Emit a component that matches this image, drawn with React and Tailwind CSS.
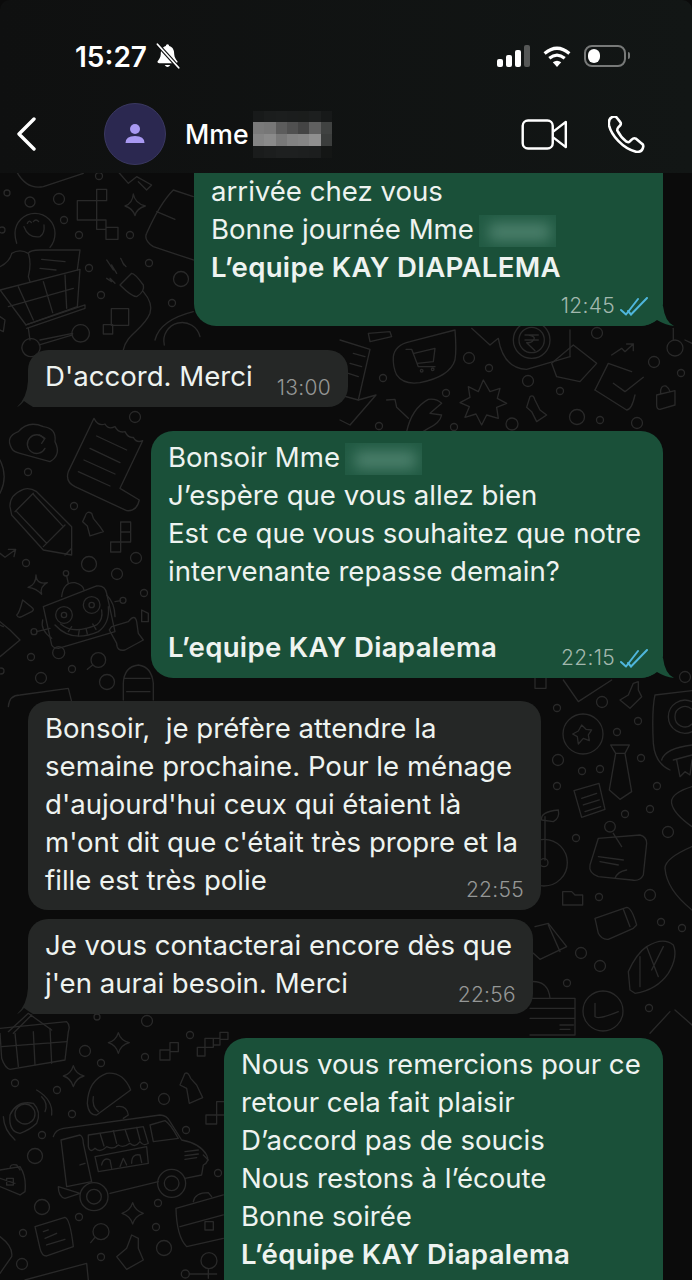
const circles = [
  [7,193,3],[30,202,5],[59,199,5.5],[64,220,3.5],[79,235,3.5],[130,235,3.5],[89,268,3.5],[149,263,3.5],[101,295,3.5],[181,279,7.5],[172,303,3.5],[99,176,3.5],[2,230,3],
  [135,417,5.5],[28,472,3.5],[74,506,3.5],[136,558,5.5],[117,574,5.5],[89,564,7.5],[26,563,3.5],[144,593,3.5],[31,657,3.5],[72,669,3.5],[41,678,5.5],[107,682,7.5],[1,671,3],
  [557,708,3.5],[602,702,5.5],[638,721,3.5],[617,732,3.5],[558,760,5.5],[582,771,3.5],[600,769,3.5],[641,758,3.5],[557,786,3.5],[657,786,3.5],[650,809,3.5],[625,814,3.5],[576,838,3.5],[668,832,5.5],[599,897,3.5],[650,895,5.5],[661,922,3.5],[682,928,3.5],[581,953,5.5],[600,966,5.5],[567,983,3.5],[649,1008,3.5],[685,677,5.5],[583,734,20],[603,1011,20],
  [85,1051,5.5],[101,1063,3.5],[145,1057,3.5],[147,1021,5.5],[97,1017,3],[190,1035,3.5],[15,1083,3.5],[57,1090,3.5],[144,1086,3.5],[164,1099,5.5],[72,1114,3.5],[42,1135,3.5],[35,1156,7.5],[186,1130,3.5],[218,1173,3.5],[42,1207,7.5],[79,1217,3.5],[158,1203,3.5],[156,1227,3.5],[23,1233,3.5],[164,1248,7.5],[101,1257,3.5],[22,1264,5.5],
  [469,358,5.5],[489,368,3.5],[383,378,3.5],[446,393,3.5],[528,381,5.5],[560,391,3.5],[597,333,5.5],[654,362,5.5],[681,373,3.5],[577,417,7.5],[600,420,3.5],[637,423,5.5],[512,424,6],[379,426,3.5],[454,427,3.5],[675,348,8],
];

const Z6 = [
  "M50 5 Q80 60 130 50 L250 10","M350 0 L385 40 L410 20 L455 45 L440 60 L415 35",
  "M72 170 Q85 205 120 200 Q135 190 132 165","M82 160 Q88 148 94 158 M100 155 Q108 145 116 155",
  "M45 190 A60 60 0 0 1 165 190 Q165 215 150 232 M50 220 Q45 205 45 190",
  "M0 290 Q30 275 35 250 Q60 235 85 250 Q95 280 85 320 L90 335","M85 250 Q90 240 120 240 L240 240 L232 300","M125 268 L195 275 M120 295 L168 300",
  "M0 360 L240 298 L232 410 L78 465 Z","M55 350 L100 450 M130 335 L158 428 M195 315 L200 415 M25 410 L220 355","M78 465 L255 405 L255 415 L80 475",
  "M93 506 A27 27 0 1 1 92.9 506 M242 464 A26 26 0 1 1 241.9 464","M85 475 L90 510 M118 525 L218 495 M120 510 L218 490",
  "M232 92 H290 V58 H320 V92 H290 V150 H232 Z M290 150 H318 V178 H290 Z M318 172 H354 V208 H318 Z",
  "M400 72 Q405 100 436 108 Q410 115 405 137 Q398 115 375 108 Q398 100 400 72Z",
  "M320 270 L340 300 L335 285 L350 310 M362 265 L372 285 L368 278 L378 290 M320 325 L335 335 L330 325 L345 340",
  "M360 345 L395 310 Q405 310 430 345 Q435 365 410 380 Q395 380 360 345 Z M430 365 Q460 400 450 430 C430 480 380 490 370 540",
  "M334 416 H386 V466 H334 Z M310 464 H338 V492 H310Z",
  "M520 60 L580 80 M520 60 Q480 100 440 190 Q430 210 460 230 L580 270 M470 125 L525 148",
  "M465 510 Q480 450 580 425","M0 440 L15 450 L10 485 L0 480","M493 525 A52 52 0 0 1 600 500",
];
const Z7 = [
  "M35 145 Q15 110 55 95 Q85 60 130 80 Q170 85 165 125 Q185 165 150 185 L60 160 Q40 155 35 145Z","M132 115 A28 28 0 1 0 135 145","M118 105 L135 115 L125 130",
  "M282 55 L205 215 Q195 245 225 260 L380 332 Q410 335 418 300 L360 265 L428 122 Q410 130 400 112 Q385 115 375 95 Q355 100 345 80 Q325 90 315 72 Q295 80 282 55Z","M290 108 L380 150 M270 145 L360 188 M252 180 L345 222 M235 215 L330 258",
  "M30 320 Q28 285 70 268 Q90 262 110 275 L215 380 V465 L130 450 L35 345 Z M45 335 L100 280 M130 440 L195 375 M50 335 L140 430 M100 283 L190 380 M195 465 L215 445",
  "M255 350 Q260 330 275 340 L280 355 L300 380 L310 395 L270 408 L262 378 L248 365 Z",
  "M362 366 H392 V396 H362 Z M362 396 H392 V426 H362Z M332 426 H362 V456 H332Z",
  "M0 460 L15 472 L45 450 M25 448 L47 448 L42 470",
  "M108 525 Q110 555 142 548 Q118 560 125 583 Q110 565 84 562 Q108 555 108 525Z",
  "M68 600 Q58 640 50 645 Q55 655 65 650 L95 635 Q105 628 95 622 Z",
  "M130 620 L290 558 Q315 555 320 580 L345 695 L175 745 Q160 745 155 735 Z",
  "M167 645 A25 25 0 1 1 217 645 A25 25 0 1 1 167 645 M250 615 A25 25 0 1 1 300 615 A25 25 0 1 1 250 615 M184 645 A8 8 0 1 1 200 645 A8 8 0 1 1 184 645 M267 615 A8 8 0 1 1 283 615 A8 8 0 1 1 267 615",
  "M165 675 Q215 730 295 695 Q330 670 325 620","M182 672 Q220 705 290 675 Q310 660 305 630","M205 695 L215 680 M235 708 L238 690 M262 702 L258 685 M288 688 L278 672",
  "M205 550 L200 528","M190 520 A8 8 0 1 1 206 520 A8 8 0 1 1 190 520","M185 590 Q190 545 225 548 Q250 555 252 570","M128 660 Q120 690 155 715","M320 585 Q345 610 345 650",
  "M150 685 L110 695","M93 695 A9 9 0 1 1 111 695 A9 9 0 1 1 93 695","M345 605 L362 602","M360 601 A9 9 0 1 1 378 601 A9 9 0 1 1 360 601","M158 758 A18 18 0 1 1 194 758 A18 18 0 1 1 158 758",
  "M335 680 L385 665 Q405 640 410 665 L415 700 L430 720 L375 750 Q350 755 350 730 L328 690Z",
  "M273 780 A22 22 0 1 1 317 780 A22 22 0 1 1 273 780","M278 795 L262 808",
  "M370 900 V850 Q372 800 415 795 Q455 800 460 850 V900 M375 835 H450 M380 875 H450",
  "M25 920 Q28 885 60 885 L205 865 L215 905",
  "M0 665 L30 690 L60 720 L0 770 M10 680 L0 675","M0 180 Q25 230 0 280","M425 630 L445 640 L445 665 L425 665 Z",
];
const Z8 = [
  "M155 165 L168 178 L185 180 L175 195 L178 212 L160 205 L145 222 L142 200 L128 192 L145 183 Z",
  "M242 225 H298 L285 250 L305 365 L270 388 L238 360 L257 250 Z M257 250 H285",
  "M132 362 L207 340 L225 418 L155 442 Z M155 385 L200 370 M160 405 L208 390 M165 425 L212 410",
  "M205 505 L330 495 Q350 500 350 520 L340 615 Q330 635 305 630 L205 620 Q175 610 180 585 Z M205 560 L280 570 M210 575 L265 585",
  "M224 470 A16 16 0 1 1 256 470 A16 16 0 1 1 224 470","M250 490 L275 530","M255 625 Q262 605 290 600",
  "M98 665 H125 L135 675 H158 V705 H98 Z",
  "M195 745 L290 712 Q305 712 320 765 L310 775 L235 808 Q215 810 205 790 Z M280 718 L300 770",
  "M15 770 L55 760 L110 830 L30 868 L10 850 M55 765 L90 845",
  "M300 960 L295 905 Q320 850 350 830 Q400 800 430 825 Q445 860 415 910 Q380 960 315 970Z M350 830 L385 920 M330 860 L330 950 M400 830 L365 900",
  "M195 1000 L195 1040 Q205 1050 265 1025",
  "M0 985 H135 V1095 H0 M0 1015 H135 M0 1045 H135 M90 1078 H120 M90 1065 H130","M0 935 Q55 930 60 985",
  "M375 75 L486 62 M375 75 Q365 120 370 220 Q375 280 420 300",
  "M415 140 A50 50 0 0 1 486 95 M486 185 A50 50 0 0 1 415 140 M435 140 A30 30 0 0 1 486 118 M486 162 A30 30 0 0 1 435 140",
  "M395 270 Q405 235 486 225 M430 270 L486 255 M440 270 L450 320 L465 305 L480 315 L486 270",
  "M310 40 L325 35 L325 60 L335 80 L300 115 L270 90 L295 75 Z",
  "M-28 578 A70 70 0 1 1 112 578 A70 70 0 1 1 -28 578 M30 578 A12 12 0 1 1 54 578 A12 12 0 1 1 30 578","M45 440 V570","M35 450 Q30 425 85 420 Q90 445 70 455 Z",
  "M100 30 L145 95 L245 30","M15 20 V55 H48 V20",
  "M486 350 Q420 370 425 400 Q430 430 486 470","M486 530 Q405 565 405 595 Q410 660 486 720",
  "M360 1090 L420 1025 M435 1020 L486 1065",
];
const Z11 = [
  "M160 110 Q165 75 210 65 L345 30 Q350 90 345 120 Q330 170 240 188 Q190 195 170 165 Q158 140 160 110Z",
  "M198 88 H215 L235 140 H285 M222 100 L285 85 L280 125 L232 130","M241 152 A4 4 0 1 1 249 152 A4 4 0 1 1 241 152 M274 148 A4 4 0 1 1 282 148 A4 4 0 1 1 274 148",
  "M0 60 L90 88 L55 240 L0 225 M40 100 L75 110 M30 130 L65 140 M25 160 L55 170","M55 240 L108 225 L30 315 L0 300",
  "M85 40 L150 35 L155 50 L90 65 Z",
  "M395 25 L450 75 L475 55 Q490 145 560 148 L690 110",
  "M520 60 A55 55 0 0 1 630 60 A55 55 0 0 1 520 60 M537 60 A38 38 0 0 1 613 60 A38 38 0 0 1 537 60",
  "M555 45 H595 M555 60 H595 M565 45 Q590 50 580 60 Q575 70 560 68 L585 92",
  "M635 130 L700 75 L770 130 L720 185 L650 170 Z","M690 30 V110",
  "M815 105 L845 85 L855 95 L880 72 M860 72 H880 V92",
  "M765 210 L805 130 L875 155 M910 172 L855 215 L820 190","M765 210 L860 270 Q875 270 885 225",
  "M950 225 L1005 212 L1005 255 L960 268 Q950 268 950 255 Z M962 220 Q960 195 978 198 Q988 205 990 215",
  "M430 180 L450 215 L480 205 L472 235 L500 250 L470 262 L475 295 L440 285 L425 315 L408 282 L375 292 L388 260 L360 248 L390 232 L385 200 L415 215 Z",
  "M140 240 L165 238 L170 262 L205 295 M200 335 Q215 265 265 238 Q290 235 305 250 L270 280 L305 285 Q300 310 265 325 L240 340",
  "M570 230 Q580 222 585 240 L600 270 L620 285 L590 305 L575 275 L560 262 Z",
  "M1000 25 V60","M1035 60 L1056 70",
];
const Z5 = [
  "M0 85 L200 65 Q212 75 205 95 L195 180 L30 208 Q15 205 5 175 L0 100","M5 140 L200 125 M45 100 L55 200 M100 95 L105 195 M150 85 L155 190","M25 95 L85 40 L155 90 M40 100 L95 45",
  "M355 98 Q362 122 388 128 Q362 135 355 160 Q348 135 325 128 Q348 122 355 98Z","M220 197 Q227 222 252 228 Q227 235 220 260 Q213 235 190 228 Q213 222 220 197Z","M398 608 Q405 632 430 640 Q405 648 398 672 Q391 648 366 640 Q391 632 398 608Z",
  "M480 150 H510 V180 H480Z M510 128 H535 V155 H510Z","M592 142 H615 V168 H592Z M615 115 H640 V142 H615Z M640 115 V135 H660 V115Z M660 97 H684 V118 H660Z",
  "M262 310 Q265 240 320 220 Q370 215 392 270 L290 345 Q265 345 262 310Z M280 290 Q275 320 295 335","M350 320 Q380 315 385 345 L370 355",
  "M555 220 Q565 215 572 235 L590 255 L608 293 L568 310 L560 265 L540 255 Z",
  "M60 400 Q25 395 30 345 Q50 300 100 310 Q125 335 110 370 Q90 390 60 400Z","M45 342 A30 30 0 1 1 105 342 A30 30 0 1 1 45 342","M110 270 Q160 300 155 345 M125 290 Q145 310 135 335 M10 350 Q12 390 45 420",
  "M160 410 Q165 390 190 385 L480 345 Q500 345 510 365 L545 420 Q600 430 620 465 Q630 485 610 495 L605 525 L555 535 M475 545 L330 580 M240 580 L195 595 Q175 590 175 560 Z",
  "M183 420 L240 405 Q250 410 250 430 L275 545 L200 560 Z M240 495 L255 490",
  "M265 405 L430 380 L445 430 Q430 440 420 425 Q405 445 390 430 Q370 445 355 435 Q340 450 320 440 Q300 460 285 445 Q270 460 265 440Z","M300 400 L312 438 M340 392 L350 430 M375 388 L388 425 M410 382 L420 420",
  "M285 470 L440 440 L445 490 L295 515 Z","M305 495 Q310 470 330 480 L335 505 M360 500 L370 475 L380 495 M395 490 Q395 460 420 465 L425 488",
  "M450 375 L495 362 Q510 370 535 415 L460 425 Z","M555 455 L595 450 M555 467 L595 462 M555 478 L590 473","M610 465 L625 480",
  "M240 590 A42 42 0 1 1 324 590 A42 42 0 1 1 240 590 M260 590 A22 22 0 1 1 304 590 A22 22 0 1 1 260 590 M473 550 A42 42 0 1 1 557 550 A42 42 0 1 1 473 550 M493 550 A22 22 0 1 1 537 550 A22 22 0 1 1 493 550",
  "M0 510 L60 500 Q80 530 75 575 L60 585 L0 560 M0 535 L45 550 M20 535 H40 V555 H20 Z M30 505 Q30 490 50 495 L60 510",
  "M105 680 L195 652 Q210 655 220 740 L140 768 Q125 768 120 745 Z M130 695 L145 690 M135 715 L170 700 M140 735 L195 718",
  "M279 695 A24 24 0 1 1 327 695 A24 24 0 1 1 279 695","M285 712 L272 728",
  "M395 705 L415 715 V745 L430 780 L380 808 L350 770 L380 745 Z",
  "M528 625 L670 585 M528 625 Q530 710 560 740 L670 715 M540 680 L670 645 M580 605 Q585 578 625 578 L635 590 M615 665 H640 V690 H615Z",
  "M0 710 Q40 740 35 770 L0 820","M75 840 L260 790 L265 840",
  "M544 822 A12 12 0 1 1 568 822 A12 12 0 1 1 544 822 M603 782 A24 24 0 1 1 651 782 A24 24 0 1 1 603 782 M568 822 H650 M625 806 V835",
  "M618 345 H650 V372 H618Z M650 305 H675 V345 H650Z",
];

function Group({ x, y, paths }) {
  return (
    <g transform={`translate(${x} ${y}) scale(0.3333)`} strokeWidth="4">
      {paths.map((d, i) => <path key={i} d={d} />)}
    </g>
  );
}

function Wallpaper() {
  return (
    <svg className="absolute left-0 top-0" width="692" height="1280" viewBox="0 0 692 1280" fill="none" stroke="#292929" strokeLinejoin="round" strokeLinecap="round">
      {circles.map(([cx, cy, r], i) => <circle key={i} cx={cx} cy={cy} r={r} strokeWidth="1.3" />)}
      <Group x={0} y={170} paths={Z6} />
      <Group x={0} y={400} paths={Z7} />
      <Group x={530} y={670} paths={Z8} />
      <Group x={340} y={320} paths={Z11} />
      <Group x={0} y={1000} paths={Z5} />
    </svg>
  );
}

function Ticks() {
  return (
    <svg width="28" height="19" viewBox="0 0 28 19" fill="none" stroke="#4fb6dc" strokeWidth="2" strokeLinecap="round" strokeLinejoin="round" className="ml-[5px]">
      <path d="M1 13 L6 17.5 L18 2" />
      <path d="M11 17.5 L27 1" />
      <path d="M8 14 L11 17.5" />
    </svg>
  );
}

function TailOut() {
  return (
    <svg className="absolute -right-[11px] bottom-0 -z-10" width="35" height="20" viewBox="-24 -19 35 20" fill="#1a5039">
      <path d="M-24 1 H-23 Q-12 0 -6 -5 Q2 0 11 1 Q2 -3 0 -19 L-24 -19Z" />
    </svg>
  );
}

function TailIn() {
  return (
    <svg className="absolute -left-[11px] bottom-0 -z-10" width="35" height="26" viewBox="-11 -25 35 26" fill="#252726">
      <path d="M24 1 H5 Q0 -2 -4 -5 Q-8 0 -11 1 Q-1 -8 0 -25 L24 -25Z" />
    </svg>
  );
}

function Blur() {
  return (
    <span className="relative inline-block -ml-[3px] w-[77px] h-[32px] align-middle overflow-hidden bg-[#215a43]">
      <span className="absolute left-[10px] right-[6px] top-[8px] bottom-[6px] bg-[#4b7f6b] blur-[7px]" />
    </span>
  );
}

function Time({ children, light }) {
  return (
    <span className={`text-[21px] leading-[28px] tracking-[0.3px] font-light whitespace-nowrap ${light ? "text-[#a2b8ae]" : "text-[#959796]"}`}>{children}</span>
  );
}

const cells = [
  ["bg-[#181a1a]","bg-[#1b1d1d]","bg-[#1c1e1e]","bg-[#1b1d1d]","bg-[#1b1d1c]","bg-[#1d1f1f]","bg-[#171919]"],
  ["bg-[#7a7a7a]","bg-[#777777]","bg-[#5c5c5c]","bg-[#505050]","bg-[#444444]","bg-[#606060]","bg-[#404241]"],
  ["bg-[#848484]","bg-[#8a8a8a]","bg-[#787878]","bg-[#828282]","bg-[#858585]","bg-[#8f8f8f]","bg-[#3b3d3c]"],
  ["bg-[#1a1c1c]","bg-[#1c1e1e]","bg-[#1e2020]","bg-[#1e2020]","bg-[#1d1f1f]","bg-[#1c1e1e]","bg-[#141615]"],
];

export default function App() {
  return (
    <div className="relative w-[692px] h-[1280px] overflow-hidden bg-[#0b0b0b] text-[#eef3f0] font-['Inter','Liberation_Sans',sans-serif]">
      <Wallpaper />
      <div className="relative flex flex-col h-full">
        <header className="h-[173px] shrink-0 flex flex-col rounded-t-[10px] bg-gradient-to-r from-[#0f1010] to-[#121615] text-white">
          <div className="h-[92px] pt-[20px] flex items-center">
            <span className="ml-[75px] w-[74px] mt-[1px] text-[28px] font-semibold leading-none">15:27</span>
            <svg className="ml-[5px]" width="27" height="28" viewBox="0 0 24 25">
              <path fill="#fff" d="M12 2 Q13.5 2 13.5 3.5 C17 4.5 18 7.5 18 11 C18 14 20 16 21 17.5 Q21 19 19.5 19 H4.5 Q3 19 3 17.5 C4 16 6 14 6 11 C6 7.5 7 4.5 10.5 3.5 Q10.5 2 12 2Z" />
              <path fill="#fff" d="M9.5 20.5 Q12 24 14.5 20.5Z" />
              <path stroke="#0f1010" strokeWidth="3.6" d="M3 2 L22 23" />
              <path stroke="#fff" strokeWidth="1.6" strokeLinecap="round" d="M3 2 L22 23" />
            </svg>
            <div className="ml-auto flex items-end gap-[3px] h-[22px]">
              <span className="w-[6px] h-[8px] rounded-[2px] bg-white" />
              <span className="w-[6px] h-[12px] rounded-[2px] bg-white" />
              <span className="w-[6px] h-[17px] rounded-[2px] bg-white" />
              <span className="w-[6px] h-[22px] rounded-[2px] bg-[#555756]" />
            </div>
            <svg className="ml-[13px]" width="28" height="21" viewBox="0 0 28 21" fill="none" stroke="#fff" strokeWidth="3.2">
              <path fill="#fff" stroke="none" d="M14 21 L9.8 16.3 Q14 13.3 18.2 16.3Z" />
              <path d="M6.3 12.3 Q14 6 21.7 12.3" />
              <path d="M1.6 7.5 Q14 -3 26.4 7.5" />
            </svg>
            <div className="relative ml-[13px] mr-[66px] w-[42px] h-[22px] rounded-[8px] border-2 border-[#777978] p-[2px]">
              <div className="w-[12px] h-full rounded-[6px] bg-white" />
              <span className="absolute -right-[6px] top-[5px] w-[2px] h-[7px] rounded-r-[2px] bg-[#777978]" />
            </div>
          </div>
          <div className="h-[81px] pt-[3px] flex items-center">
            <svg className="ml-[17px]" width="20" height="34" viewBox="0 0 20 34" fill="none" stroke="#fff" strokeWidth="3.4" strokeLinecap="round" strokeLinejoin="round">
              <path d="M17 2 L2 17 L17 32" />
            </svg>
            <div className="ml-[67px] w-[62px] h-[62px] rounded-full bg-[#2b2850] border border-[#3a3860] flex items-center justify-center">
              <svg width="24" height="24" viewBox="0 0 24 24" fill="#a999f2">
                <circle cx="12" cy="7" r="5" />
                <path d="M2.5 21 Q2.5 14 12 14 Q21.5 14 21.5 21 Z" />
              </svg>
            </div>
            <span className="ml-[19px] text-[26.6px] font-medium leading-none w-[63px]">Mme</span>
            <div className="ml-[5px] grid grid-cols-7 w-[79px] h-[47px]">
              {cells.flat().map((c, i) => <span key={i} className={c} />)}
            </div>
            <svg className="ml-auto" width="47" height="31" viewBox="0 0 48 32" fill="none" stroke="#fff" strokeWidth="2.5" strokeLinejoin="round">
              <rect x="1.5" y="1.5" width="31" height="29" rx="5.5" />
              <path d="M33 13 L46 3 V29 L33 19" />
            </svg>
            <svg className="ml-[40px] mr-[47px]" width="37" height="37" viewBox="0 0 36 36" fill="none" stroke="#fff" strokeWidth="2.5" strokeLinejoin="round">
              <path d="M4 1 Q0 3 1 9 C3 18 14 32 28 35 Q33 35 34 31 Q35 28 33 27 L27 22 Q25 21 23 23 L21 25 Q20 26 18 25 C14 22 11 18 9 14 Q9 12 10 11 L12 9 Q13 7 12 6 L8 1 Q6 0 4 1Z" />
            </svg>
          </div>
        </header>

        <main className="flex flex-col text-[27.6px] leading-[38px]">
          <div className="relative isolate self-end mr-[29px] w-[469px] h-[153px] rounded-b-[22px] bg-[#1a5039] pl-[17px] pr-[15px]">
            <p className="-mt-[1px]">arrivée chez vous</p>
            <p>Bonne journée Mme <Blur /></p>
            <p className="font-semibold tracking-[0.3px]">L’equipe KAY DIAPALEMA</p>
            <div className="flex items-center justify-end mt-[6px]">
              <Time light>12:45</Time>
              <Ticks />
            </div>
            <TailOut />
          </div>

          <div className="relative isolate self-start ml-[28px] mt-[24px] w-[320px] h-[57px] rounded-[20px] bg-[#252726] pl-[17px] pt-[7px] pr-[17px] flex justify-between">
            <span>D'accord. Merci</span>
            <span className="mt-[9px]"><Time>13:00</Time></span>
            <TailIn />
          </div>

          <div className="relative isolate self-end mr-[29px] mt-[24px] w-[512px] h-[247px] rounded-[22px] bg-[#1a5039] pl-[17px] pr-[15px] pt-[7px]">
            <p>Bonsoir Mme <Blur /></p>
            <p>J’espère que vous allez bien</p>
            <p>Est ce que vous souhaitez que notre</p>
            <p>intervenante repasse demain?</p>
            <p className="h-[38px]"></p>
            <div className="flex justify-between">
              <span className="font-semibold tracking-[0.3px]">L’equipe KAY Diapalema</span>
              <div className="flex items-center mt-[16px] h-[28px]">
                <Time light>22:15</Time>
                <Ticks />
              </div>
            </div>
            <TailOut />
          </div>

          <div className="relative isolate self-start ml-[28px] mt-[23px] w-[513px] h-[209px] rounded-[20px] bg-[#252726] pl-[17px] pr-[17px] pt-[8px]">
            <p>Bonsoir,&nbsp; je préfère attendre la</p>
            <p>semaine prochaine. Pour le ménage</p>
            <p>d'aujourd'hui ceux qui étaient là</p>
            <p>m'ont dit que c'était très propre et la</p>
            <div className="flex justify-between">
              <span>fille est très polie</span>
              <span className="mt-[7px]"><Time>22:55</Time></span>
            </div>
          </div>

          <div className="relative isolate self-start ml-[28px] mt-[9px] w-[505px] h-[95px] rounded-[20px] bg-[#252726] pl-[17px] pr-[17px] pt-[7px]">
            <p>Je vous contacterai encore dès que</p>
            <div className="flex justify-between">
              <span>j'en aurai besoin. Merci</span>
              <span className="mt-[9px]"><Time>22:56</Time></span>
            </div>
            <TailIn />
          </div>

          <div className="self-end mr-[29px] mt-[24px] w-[439px] h-[260px] rounded-t-[22px] bg-[#1a5039] pl-[17px] pr-[15px] pt-[7px]">
            <p>Nous vous remercions pour ce</p>
            <p>retour cela fait plaisir</p>
            <p>D’accord pas de soucis</p>
            <p>Nous restons à l’écoute</p>
            <p>Bonne soirée</p>
            <p className="font-semibold tracking-[0.3px]">L’équipe KAY Diapalema</p>
          </div>
        </main>
      </div>
    </div>
  );
}
